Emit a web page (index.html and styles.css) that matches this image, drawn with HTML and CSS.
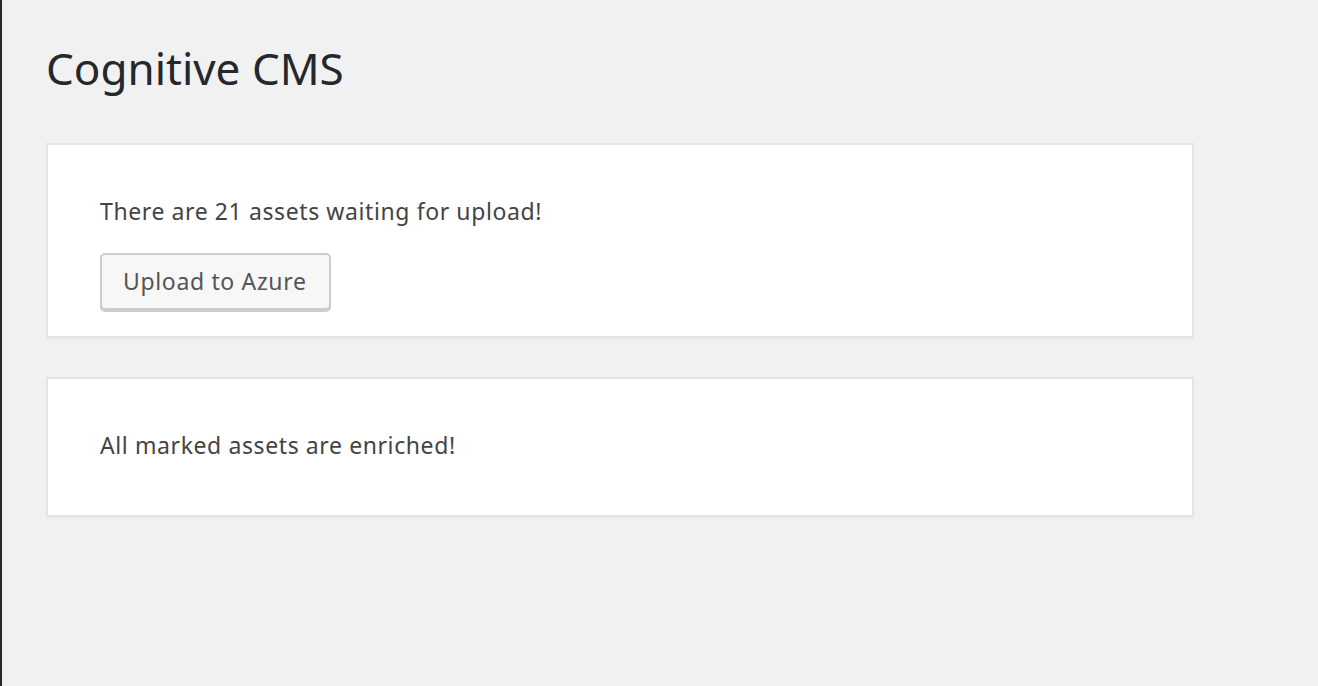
FILE: index.html
```html
<!DOCTYPE html>
<html lang="en">
<head>
<meta charset="utf-8">
<title>Cognitive CMS</title>
<link rel="stylesheet" href="styles.css">
</head>
<body>
<div class="admin">
  <div class="menu-edge"></div>
  <main class="wrap">
    <h1 class="title">Cognitive CMS</h1>
    <section class="card">
      <p class="msg">There are 21 assets waiting for upload!</p>
      <button class="btn" type="button">Upload to Azure</button>
    </section>
    <section class="card card-single">
      <p class="msg">All marked assets are enriched!</p>
    </section>
  </main>
</div>
</body>
</html>
```

FILE: styles.css
```css
html, body {
  margin: 0;
  padding: 0;
  height: 100%;
}
body {
  background: #f1f1f1;
  font-family: "Noto Sans", "Open Sans", sans-serif;
  color: #444;
}
.admin {
  display: flex;
  min-height: 100%;
}
.menu-edge {
  width: 2px;
  background: #23282d;
  flex: none;
}
.wrap {
  flex: 1;
  padding: 0 0 0 44px;
  max-width: 1148px;
}
.title {
  margin: 0;
  padding: 39px 0 0;
  font-size: 44px;
  font-weight: 400;
  line-height: 58px;
  color: #23282d;
}
.card {
  margin-top: 46px;
  background: #fff;
  border: 2px solid #e5e5e5;
  box-shadow: 0 1px 1px rgba(0,0,0,.04);
  padding: 51px 52px 26px;
  display: flex;
  flex-direction: column;
  align-items: flex-start;
}
.card + .card {
  margin-top: 39px;
}
.card-single {
  padding-top: 51px;
  padding-bottom: 55px;
}
.msg {
  margin: 0;
  font-size: 23px;
  letter-spacing: 0.6px;
  line-height: 30px;
  color: #444;
}
.btn {
  margin-top: 27px;
  font-family: inherit;
  font-size: 23px;
  letter-spacing: 0.65px;
  line-height: 30px;
  color: #555;
  background: #f7f7f7;
  border: 2px solid #ccc;
  border-radius: 5px;
  box-shadow: 0 2px 0 #ccc;
  padding: 11px 22px 12px 21px;
  cursor: pointer;
}
```
